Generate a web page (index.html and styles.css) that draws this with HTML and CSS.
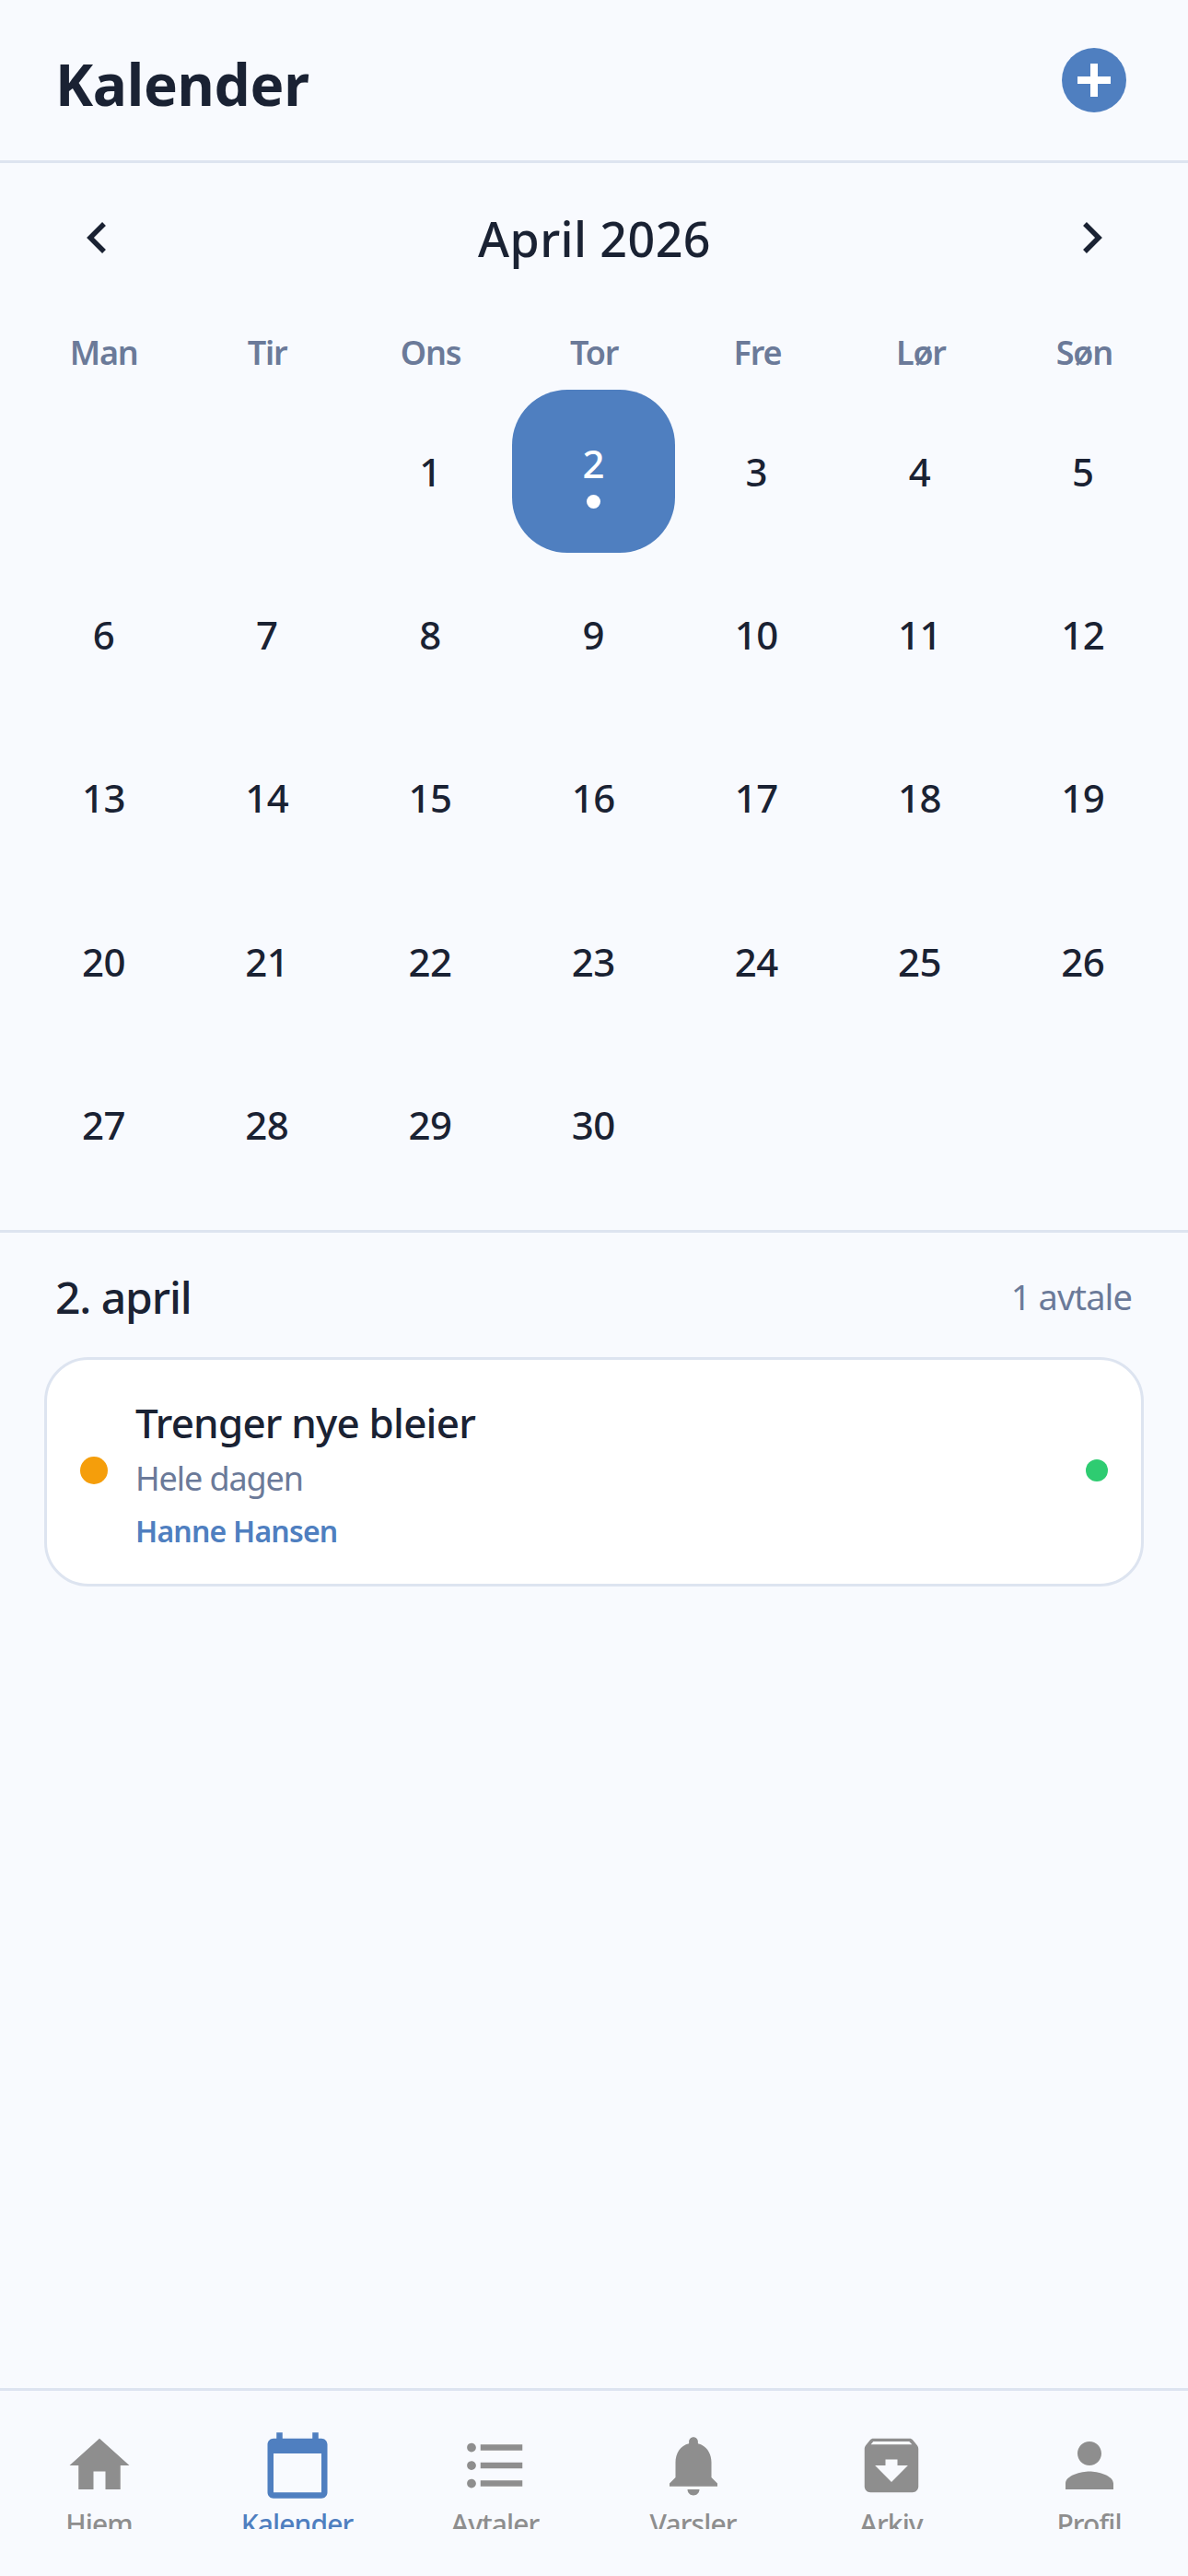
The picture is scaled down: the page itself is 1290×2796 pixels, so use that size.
FILE: index.html
```html
<!DOCTYPE html>
<html lang="no">
<head>
    <meta charset="UTF-8">
    <meta name="viewport" content="width=device-width, initial-scale=1.0">
    <title>Kalender</title>
    <link rel="stylesheet" href="styles.css">
</head>
<body>
    <div class="app">
        <header class="top-bar">
            <h1>Kalender</h1>
            <button class="add-btn" aria-label="Ny avtale">
                <svg viewBox="0 0 70 70" width="70" height="70"><path d="M31 17h8v14h14v8H39v14h-8V39H17v-8h14z" fill="#fff"/></svg>
            </button>
        </header>

        <section class="calendar">
            <div class="month-nav">
                <svg class="chevron" viewBox="0 0 24 36" width="24" height="36"><path d="M20 3L5 18l15 15" fill="none" stroke="#1a2233" stroke-width="5.5"/></svg>
                <h2>April 2026</h2>
                <svg class="chevron" viewBox="0 0 24 36" width="24" height="36"><path d="M4 3l15 15L4 33" fill="none" stroke="#1a2233" stroke-width="5.5"/></svg>
            </div>
            <div class="weekdays">
                <div>Man</div><div>Tir</div><div>Ons</div><div>Tor</div><div>Fre</div><div>Lør</div><div>Søn</div>
            </div>
            <div class="days">
                <div class="day"></div>
                <div class="day"></div>
                <div class="day">1</div>
                <div class="day selected">2<span class="day-dot"></span></div>
                <div class="day">3</div>
                <div class="day">4</div>
                <div class="day">5</div>
                <div class="day">6</div>
                <div class="day">7</div>
                <div class="day">8</div>
                <div class="day">9</div>
                <div class="day">10</div>
                <div class="day">11</div>
                <div class="day">12</div>
                <div class="day">13</div>
                <div class="day">14</div>
                <div class="day">15</div>
                <div class="day">16</div>
                <div class="day">17</div>
                <div class="day">18</div>
                <div class="day">19</div>
                <div class="day">20</div>
                <div class="day">21</div>
                <div class="day">22</div>
                <div class="day">23</div>
                <div class="day">24</div>
                <div class="day">25</div>
                <div class="day">26</div>
                <div class="day">27</div>
                <div class="day">28</div>
                <div class="day">29</div>
                <div class="day">30</div>
            </div>
        </section>

        <section class="agenda">
            <div class="agenda-head">
                <h3>2. april</h3>
                <span class="agenda-count">1 avtale</span>
            </div>
            <div class="event-card">
                <span class="dot dot-priority"></span>
                <div class="event-info">
                    <div class="event-title">Trenger nye bleier</div>
                    <div class="event-time">Hele dagen</div>
                    <div class="event-person">Hanne Hansen</div>
                </div>
                <span class="dot dot-status"></span>
            </div>
        </section>

        <nav class="tab-bar">
            <a class="tab">
                <svg viewBox="0 0 24 24"><path d="M10 20v-6h4v6h5v-8h3L12 3 2 12h3v8z"/></svg>
                <span>Hjem</span>
            </a>
            <a class="tab active">
                <svg viewBox="0 0 24 24"><path d="M20 3h-1V1h-2v2H7V1H5v2H4C2.9 3 2 3.9 2 5v16c0 1.1.9 2 2 2h16c1.1 0 2-.9 2-2V5c0-1.1-.9-2-2-2zm0 18H4V8h16v13z"/></svg>
                <span>Kalender</span>
            </a>
            <a class="tab">
                <svg viewBox="0 0 24 24"><path d="M4 10.5c-.83 0-1.5.67-1.5 1.5s.67 1.5 1.5 1.5 1.5-.67 1.5-1.5-.67-1.5-1.5-1.5zm0-6c-.83 0-1.5.67-1.5 1.5S3.17 7.5 4 7.5 5.5 6.83 5.5 6 4.83 4.5 4 4.5zm0 12c-.83 0-1.5.68-1.5 1.5s.68 1.5 1.5 1.5 1.5-.68 1.5-1.5-.67-1.5-1.5-1.5zM7 19h14v-2H7v2zm0-6h14v-2H7v2zm0-8v2h14V5H7z"/></svg>
                <span>Avtaler</span>
            </a>
            <a class="tab">
                <svg viewBox="0 0 24 24"><path d="M12 22c1.1 0 2-.9 2-2h-4c0 1.1.89 2 2 2zm6-6v-5c0-3.07-1.64-5.64-4.5-6.32V4c0-.83-.67-1.5-1.5-1.5s-1.5.67-1.5 1.5v.68C7.63 5.36 6 7.92 6 11v5l-2 2v1h16v-1l-2-2z"/></svg>
                <span>Varsler</span>
            </a>
            <a class="tab">
                <svg viewBox="0 0 24 24"><path d="M20.54 5.23l-1.39-1.68C18.88 3.21 18.47 3 18 3H6c-.47 0-.88.21-1.16.55L3.46 5.23C3.17 5.57 3 6.02 3 6.5V19c0 1.1.9 2 2 2h14c1.1 0 2-.9 2-2V6.5c0-.48-.17-.93-.46-1.27zM12 17.5L6.5 12H10v-2h4v2h3.5L12 17.5zM5.12 5l.81-1h12l.94 1H5.12z"/></svg>
                <span>Arkiv</span>
            </a>
            <a class="tab">
                <svg viewBox="0 0 24 24"><path d="M12 12c2.21 0 4-1.79 4-4s-1.79-4-4-4-4 1.79-4 4 1.79 4 4 4zm0 2c-2.67 0-8 1.34-8 4v2h16v-2c0-2.66-5.33-4-8-4z"/></svg>
                <span>Profil</span>
            </a>
        </nav>
    </div>
</body>
</html>
```

FILE: styles.css
```css
* {
    box-sizing: border-box;
}
body {
    font-family: 'Noto Sans', sans-serif;
    margin: 0;
    padding: 0;
    background-color: #f8fafe;
    color: #1a2233;
}
.app {
    width: 1290px;
    height: 2796px;
    display: flex;
    flex-direction: column;
    overflow: hidden;
}
.top-bar {
    height: 177px;
    flex: none;
    display: flex;
    justify-content: space-between;
    align-items: flex-start;
    padding: 52px 67px 0 60px;
    border-bottom: 3px solid #dde4f0;
}
.top-bar h1 {
    margin: 0;
    font-size: 62px;
    line-height: 78px;
    font-weight: 700;
    letter-spacing: -0.3px;
}
.add-btn {
    width: 70px;
    height: 70px;
    padding: 0;
    border: none;
    border-radius: 50%;
    background: #4f7fc0;
}
.add-btn svg {
    display: block;
}
.calendar {
    flex: none;
    height: 1161px;
    padding: 0 24px;
    border-bottom: 3px solid #dde4f0;
}
.month-nav {
    height: 162px;
    display: flex;
    justify-content: space-between;
    align-items: center;
    padding: 0 68px 0 69px;
}
.month-nav h2 {
    margin: 0;
    font-size: 52px;
    font-weight: 500;
    letter-spacing: 0.4px;
}
.weekdays {
    height: 84px;
    padding-top: 3px;
    display: grid;
    grid-template-columns: repeat(7, 1fr);
    align-items: center;
    text-align: center;
    font-size: 36px;
    font-weight: 600;
    letter-spacing: -1.2px;
    color: #6b7a99;
}
.days {
    display: grid;
    grid-template-columns: repeat(7, 177.2px);
}
.day {
    aspect-ratio: 1;
    display: flex;
    flex-direction: column;
    justify-content: center;
    align-items: center;
    font-size: 42px;
    line-height: 63px;
    font-weight: 500;
    letter-spacing: -0.5px;
}
.day.selected {
    background: #4f7fc0;
    border-radius: 60px;
    color: #fff;
}
.day-dot {
    width: 15px;
    height: 15px;
    margin-top: 3px;
    border-radius: 50%;
    background: #fff;
}
.agenda {
    flex: 1;
    padding: 0 48px;
}
.agenda-head {
    height: 135px;
    padding: 3px 13px 0 12px;
    display: flex;
    justify-content: space-between;
    align-items: center;
}
.agenda-head h3 {
    margin: 0;
    font-size: 48px;
    font-weight: 500;
    letter-spacing: -1.1px;
}
.agenda-count {
    font-size: 38px;
    letter-spacing: -0.9px;
    color: #6b7a99;
}
.event-card {
    height: 249px;
    display: flex;
    align-items: center;
    padding: 0 36px 3px 36px;
    background: #fff;
    border: 3px solid #dde4f0;
    border-radius: 48px;
}
.dot {
    flex: none;
    border-radius: 50%;
}
.dot-priority {
    width: 30px;
    height: 30px;
    background: #f59e0b;
}
.dot-status {
    width: 24px;
    height: 24px;
    background: #2ecc71;
}
.event-info {
    flex: 1;
    margin-left: 30px;
    margin-top: 10px;
}
.event-title {
    font-size: 44px;
    line-height: 60px;
    font-weight: 500;
    letter-spacing: -0.8px;
}
.event-time {
    margin-top: 4px;
    font-size: 36px;
    line-height: 54px;
    letter-spacing: -1.1px;
    color: #6b7a99;
}
.event-person {
    margin-top: 3px;
    font-size: 32px;
    line-height: 54px;
    font-weight: 600;
    letter-spacing: -0.8px;
    color: #4f7fc0;
}
.tab-bar {
    height: 204px;
    flex: none;
    display: flex;
    padding-top: 42px;
    border-top: 3px solid #dde4f0;
}
.tab {
    flex: 1;
    display: flex;
    flex-direction: column;
    align-items: center;
    height: 108px;
    overflow: hidden;
    color: #8e8e8e;
}
.tab svg {
    width: 78px;
    height: 78px;
    flex: none;
    fill: currentColor;
}
.tab span {
    font-size: 30px;
    line-height: 50px;
    font-weight: 500;
    letter-spacing: -0.9px;
}
.tab.active {
    color: #4f7fc0;
}
```
